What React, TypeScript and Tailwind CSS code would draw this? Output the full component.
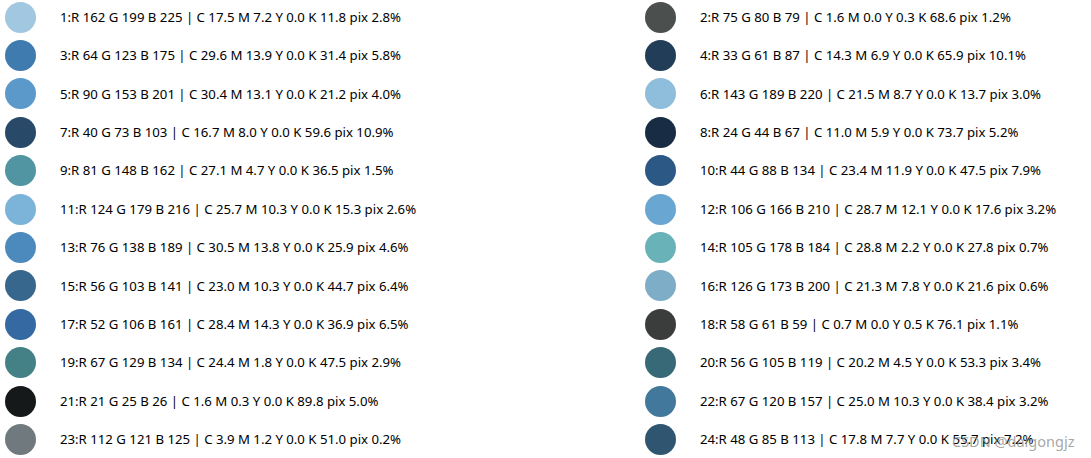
const rows: [string, string][] = [
  ["#a2c7e1", "1:R 162 G 199 B 225 | C 17.5 M 7.2 Y 0.0 K 11.8 pix 2.8%"],
  ["#4b504f", "2:R 75 G 80 B 79 | C 1.6 M 0.0 Y 0.3 K 68.6 pix 1.2%"],
  ["#407baf", "3:R 64 G 123 B 175 | C 29.6 M 13.9 Y 0.0 K 31.4 pix 5.8%"],
  ["#213d57", "4:R 33 G 61 B 87 | C 14.3 M 6.9 Y 0.0 K 65.9 pix 10.1%"],
  ["#5a99c9", "5:R 90 G 153 B 201 | C 30.4 M 13.1 Y 0.0 K 21.2 pix 4.0%"],
  ["#8fbddc", "6:R 143 G 189 B 220 | C 21.5 M 8.7 Y 0.0 K 13.7 pix 3.0%"],
  ["#284967", "7:R 40 G 73 B 103 | C 16.7 M 8.0 Y 0.0 K 59.6 pix 10.9%"],
  ["#182c43", "8:R 24 G 44 B 67 | C 11.0 M 5.9 Y 0.0 K 73.7 pix 5.2%"],
  ["#5194a2", "9:R 81 G 148 B 162 | C 27.1 M 4.7 Y 0.0 K 36.5 pix 1.5%"],
  ["#2c5886", "10:R 44 G 88 B 134 | C 23.4 M 11.9 Y 0.0 K 47.5 pix 7.9%"],
  ["#7cb3d8", "11:R 124 G 179 B 216 | C 25.7 M 10.3 Y 0.0 K 15.3 pix 2.6%"],
  ["#6aa6d2", "12:R 106 G 166 B 210 | C 28.7 M 12.1 Y 0.0 K 17.6 pix 3.2%"],
  ["#4c8abd", "13:R 76 G 138 B 189 | C 30.5 M 13.8 Y 0.0 K 25.9 pix 4.6%"],
  ["#69b2b8", "14:R 105 G 178 B 184 | C 28.8 M 2.2 Y 0.0 K 27.8 pix 0.7%"],
  ["#38678d", "15:R 56 G 103 B 141 | C 23.0 M 10.3 Y 0.0 K 44.7 pix 6.4%"],
  ["#7eadc8", "16:R 126 G 173 B 200 | C 21.3 M 7.8 Y 0.0 K 21.6 pix 0.6%"],
  ["#346aa1", "17:R 52 G 106 B 161 | C 28.4 M 14.3 Y 0.0 K 36.9 pix 6.5%"],
  ["#3a3d3b", "18:R 58 G 61 B 59 | C 0.7 M 0.0 Y 0.5 K 76.1 pix 1.1%"],
  ["#438186", "19:R 67 G 129 B 134 | C 24.4 M 1.8 Y 0.0 K 47.5 pix 2.9%"],
  ["#386977", "20:R 56 G 105 B 119 | C 20.2 M 4.5 Y 0.0 K 53.3 pix 3.4%"],
  ["#15191a", "21:R 21 G 25 B 26 | C 1.6 M 0.3 Y 0.0 K 89.8 pix 5.0%"],
  ["#43789d", "22:R 67 G 120 B 157 | C 25.0 M 10.3 Y 0.0 K 38.4 pix 3.2%"],
  ["#70797d", "23:R 112 G 121 B 125 | C 3.9 M 1.2 Y 0.0 K 51.0 pix 0.2%"],
  ["#305571", "24:R 48 G 85 B 113 | C 17.8 M 7.7 Y 0.0 K 55.7 pix 7.2%"],
];

function Row({ color, text }: { color: string; text: string }) {
  return (
    <div className="flex h-[38.4px] items-center">
      <div className="h-[31px] w-[31px] shrink-0 rounded-full" style={{ backgroundColor: color }} />
      <span className="ml-[24px] mt-[1px] whitespace-nowrap text-[13.2px] text-black">{text}</span>
    </div>
  );
}

export default function App() {
  return (
    <div
      className="relative h-[458px] w-[1091px] overflow-hidden bg-white"
      style={{ fontFamily: '"Noto Sans", "Open Sans", sans-serif' }}
    >
      <div className="grid grid-cols-[640px_451px] pl-[5px] -mt-[2px]">
        {rows.map(([c, t], i) => (
          <Row key={i} color={c} text={t} />
        ))}
      </div>
      <div className="absolute left-[952px] top-[431px] text-[14.5px] text-[#8f8f8f]/80">CSDN @daigongjz</div>
    </div>
  );
}
